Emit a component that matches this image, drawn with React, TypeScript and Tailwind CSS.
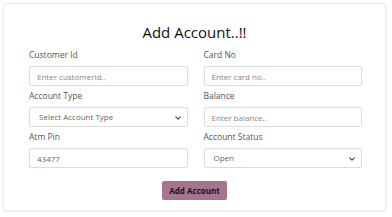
import React from "react";

const font = { fontFamily: '"Open Sans", "Noto Sans", sans-serif' };

function Chevron() {
  return (
    <svg width="6" height="4" viewBox="0 0 8 5" className="absolute right-[6px] top-[8px]" fill="none">
      <path d="M1 1l3 3 3-3" stroke="#444" strokeWidth="1.5" strokeLinecap="round" strokeLinejoin="round" />
    </svg>
  );
}

function Field({ label, children }: { label: string; children: React.ReactNode }) {
  return (
    <div className="flex flex-col">
      <label className="text-[8.5px] leading-[12px] text-[#555] mb-[5px]">{label}</label>
      {children}
    </div>
  );
}

function Input({ placeholder, value }: { placeholder?: string; value?: string }) {
  return (
    <input
      readOnly
      placeholder={placeholder}
      defaultValue={value}
      className="h-[20px] w-full border border-[#dcdcdc] rounded-[2px] px-[7px] text-[8px] text-[#666] placeholder:text-[#858585] outline-none bg-white"
      style={font}
    />
  );
}

function Select({ text }: { text: string }) {
  return (
    <div className="relative h-[20px] w-full border border-[#dcdcdc] rounded-[2px] bg-white flex items-center">
      <span className="pl-[9px] text-[8px] text-[#666]">{text}</span>
      <Chevron />
    </div>
  );
}

export default function App() {
  return (
    <div className="w-[392px] h-[217px] bg-white" style={font}>
      <div className="ml-[3px] mt-[3px] w-[383px] h-[208px] border border-[#ececec] shadow-[0_1px_2px_rgba(0,0,0,0.06)] bg-white pt-[17px] pl-[25px] pr-[23px]">
        <h1 className="text-center text-[15px] leading-[22px] text-[#111] mb-[6px] ml-[-2px]">Add Account..!!</h1>
        <div className="grid grid-cols-2 gap-x-[16px] gap-y-[4px]">
          <Field label="Customer Id">
            <Input placeholder="Enter customerId.." />
          </Field>
          <Field label="Card No">
            <Input placeholder="Enter card no.." />
          </Field>
          <Field label="Account Type">
            <Select text="Select Account Type" />
          </Field>
          <Field label="Balance">
            <Input placeholder="Enter balance.." />
          </Field>
          <Field label="Atm Pin">
            <Input value="43477" />
          </Field>
          <Field label="Account Status">
            <Select text="Open" />
          </Field>
        </div>
        <div className="flex justify-center mt-[13px] ml-[-2px]">
          <button className="h-[19px] w-[65px] rounded-[2px] bg-[#a7748d] text-[8px] font-bold text-[#1e1219]">
            Add Account
          </button>
        </div>
      </div>
    </div>
  );
}
